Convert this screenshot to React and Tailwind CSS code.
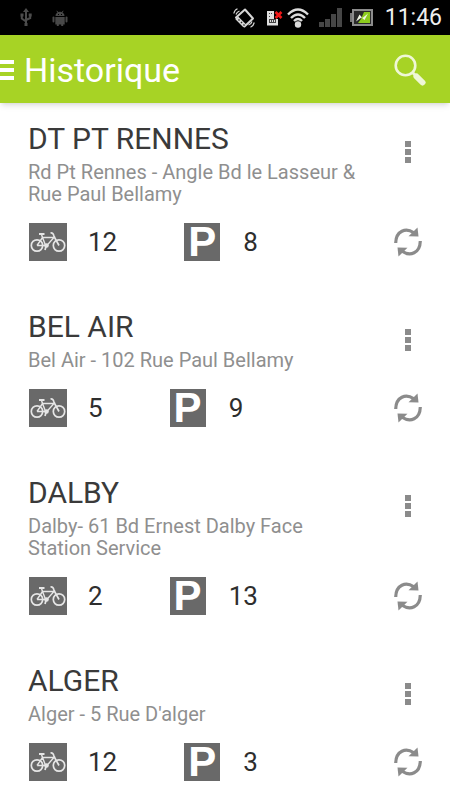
import React from "react";

const stations = [
    { id: 1, name: "DT PT RENNES", address: "Rd Pt Rennes - Angle Bd le Lasseur & Rue Paul Bellamy", bikes: 12, places: 8 },
    { id: 2, name: "BEL AIR", address: "Bel Air - 102 Rue Paul Bellamy", bikes: 5, places: 9 },
    { id: 3, name: "DALBY", address: "Dalby- 61 Bd Ernest Dalby Face Station Service", bikes: 2, places: 13 },
    { id: 4, name: "ALGER", address: "Alger - 5 Rue D'alger", bikes: 12, places: 3 },
];

function UsbIcon() {
    return (
        <svg width="12" height="20" viewBox="0 0 12 20" fill="none" stroke="#4c4c4c" strokeWidth="2">
            <path d="M6 4v12M1.8 8v2.5L6 13.5M10.2 8v2L6 12" />
            <path d="M6 0l3 4H3zM4.5 15h3v3h-3z" fill="#4c4c4c" stroke="none" />
            <path d="M0.5 5.5h3v3h-3zM8.7 5.5h3v3h-3z" fill="#4c4c4c" stroke="none" />
        </svg>
    );
}

function AndroidIcon() {
    return (
        <svg width="16" height="16" viewBox="0 0 16 16" fill="#484848">
            <path d="M3.5 6a4.5 4.2 0 0 1 9 0z" />
            <path d="M4.8 0.8l1.5 2.2M11.2 0.8L9.7 3" stroke="#484848" />
            <path d="M3.3 7h9.4v7.5H3.3z" />
            <rect x="0.5" y="6.5" width="2" height="6" rx="1" />
            <rect x="13.5" y="6.5" width="2" height="6" rx="1" />
            <rect x="4.8" y="14" width="2" height="2" />
            <rect x="9.2" y="14" width="2" height="2" />
            <path d="M6 4h1v1H6zM9 4h1v1H9z" fill="#000" />
        </svg>
    );
}

function VibrateIcon() {
    return (
        <svg width="22" height="20" viewBox="0 0 22 20" fill="none" stroke="#d6d6d6">
            <path d="M12 1.5L20 10.500L11.500 18.500L3 9.500z" strokeWidth="2" strokeLinejoin="round" />
            <path d="M3.800 9.800L11.800 17.800" strokeWidth="4" />
            <path d="M5.500 11.500l1 1M8 14l1 1M10.500 16.500l1 1" stroke="#222" strokeWidth="1.300" />
            <path d="M0.800 5.500Q1.500 2 4.500 0.800M3 6.500Q3.800 4 6.500 3" strokeWidth="1.200" />
            <path d="M21.300 14.500Q20.500 18 17.500 19.300M19 13.500Q18.300 16 15.500 17" strokeWidth="1.200" />
        </svg>
    );
}

function SimIcon() {
    return (
        <svg width="16" height="16" viewBox="0 0 16 16">
            <path d="M0 1h7v8h4v6.500H0z" fill="#dedede" />
            <path d="M2 3h1v1H2zM4 3h1v1H4zM2 6h1v1H2zM2 9h7v4H2z" fill="#444" />
            <path d="M3 10h1v2H3zM5 10h1v2H5zM7 10h1v2H7z" fill="#dedede" />
            <path d="M8.500 2l6 6M14.500 2l-6 6" stroke="#f01818" strokeWidth="2.600" />
        </svg>
    );
}

function WifiIcon() {
    return (
        <svg width="22" height="20" viewBox="0 0 22 20" fill="none" stroke="#dcdcdc" strokeWidth="2.400">
            <path d="M1 6.500Q11-3.500 21 6.500" />
            <path d="M4 10Q11 3 18 10" />
            <path d="M7 13Q11 9 15 13" />
            <circle cx="11" cy="16.500" r="3.200" fill="#dcdcdc" stroke="none" />
        </svg>
    );
}

function SignalIcon() {
    return (
        <svg width="23" height="20" viewBox="0 0 23 20" fill="#464646">
            <rect x="0" y="14" width="5" height="5" />
            <rect x="6" y="11" width="5" height="8" />
            <rect x="12" y="6" width="5" height="13" />
            <rect x="18" y="0" width="5" height="19" />
        </svg>
    );
}

function BatteryIcon() {
    return (
        <svg width="23" height="17" viewBox="0 0 23 17">
            <path d="M0 4h3v9H0z" fill="#777" />
            <rect x="3" y="1" width="19" height="15" fill="#2a2a2a" stroke="#8c8c8c" strokeWidth="2" />
            <path d="M14 3h6v11H8l3-4z" fill="#8ccc1c" />
            <path d="M6 12.500l3.500-7 3 3.500L18 4.500l-3.500 6.500-3-2.500z" fill="#f0f5e4" />
        </svg>
    );
}

function SearchIcon() {
    return (
        <svg width="32" height="32" viewBox="0 0 32 32" fill="none" stroke="#eff7d6">
            <circle cx="11.500" cy="11.500" r="9.800" strokeWidth="2.600" />
            <path d="M18.500 18.500l4 4" strokeWidth="3" />
            <path d="M22.500 22.500l6 6" strokeWidth="6" strokeLinecap="round" />
        </svg>
    );
}

function BikeIcon() {
    return (
        <svg className="bg-[#696969]" width="38" height="38" viewBox="0 0 38 38" fill="none" stroke="#e6e6e6" role="img" aria-label="Vélos">
            <circle cx="8" cy="22.500" r="5.700" strokeWidth="1.700" />
            <circle cx="30" cy="22.500" r="5.700" strokeWidth="1.700" />
            <path d="M8 22.500L13.500 14.500L17 23.500L25 14.500H13.500M8 22.500H17" strokeWidth="1.400" />
            <path d="M30 22.500L25 13.500Q24.500 9.500 21.500 10" strokeWidth="1.700" />
            <path d="M13.500 14.500L12.500 11.500" strokeWidth="1.400" />
            <path d="M10 11h5.500" strokeWidth="2" />
            <circle cx="17.500" cy="22.500" r="2.300" fill="#e6e6e6" stroke="none" />
            <path d="M17 23.500l-1 3.500" strokeWidth="1.700" />
        </svg>
    );
}

function RefreshIcon() {
    return (
        <svg width="28" height="30" viewBox="0 0 28 30" fill="none" stroke="#8b8b8b" strokeWidth="3.200">
            <path d="M1.700 16C2 3.500 12 0.500 19.500 5.500" />
            <path d="M26.300 14C26 26.500 16 29.500 8.500 24.500" />
            <path d="M23.500 0.500L24.500 9.500L14.500 9.200z" fill="#8b8b8b" stroke="none" />
            <path d="M4.500 29.500L3.500 20.500L13.500 20.800z" fill="#8b8b8b" stroke="none" />
        </svg>
    );
}

function Station({ station }) {
    return (
        <li className="pt-5 pb-[30px] pl-7 pr-[26px] last:pb-4">
            <div className="flex justify-between items-start">
                <div className="max-w-[340px]">
                    <h2 className="text-[30px] leading-8 text-[#3a3a3a]">{station.name}</h2>
                    <p className="mt-1.5 text-[20px] leading-[22px] text-[#8f8f8f]">{station.address}</p>
                </div>
                <button type="button" aria-label="Options" className="flex flex-col gap-0.5 mt-[18px] mr-[13px]">
                    <span className="size-1.5 bg-[#8b8b8b]" />
                    <span className="size-1.5 bg-[#8b8b8b]" />
                    <span className="size-1.5 bg-[#8b8b8b]" />
                </button>
            </div>
            <div className="flex items-center mt-[18px] pl-px text-[26px] leading-[38px] text-[#2e2e2e]">
                <BikeIcon />
                <span className="ml-[21px]">{station.bikes}</span>
                <span className="flex items-start justify-center w-9 h-[38px] ml-[67px] bg-[#696969] text-white text-[42px] leading-[38px] font-bold font-['Liberation_Sans',sans-serif]">
                    P
                </span>
                <span className="ml-[23px]">{station.places}</span>
                <button type="button" aria-label="Actualiser" className="ml-auto mr-0.5">
                    <RefreshIcon />
                </button>
            </div>
        </li>
    );
}

export default function App() {
    return (
        <div className="min-h-screen bg-white font-[Roboto,sans-serif]">
            <div className="flex items-center h-[35px] bg-black pl-5 pr-2">
                <UsbIcon />
                <span className="ml-5">
                    <AndroidIcon />
                </span>
                <div className="flex items-center ml-auto">
                    <VibrateIcon />
                    <span className="ml-3">
                        <SimIcon />
                    </span>
                    <span className="ml-1">
                        <WifiIcon />
                    </span>
                    <span className="ml-2.5">
                        <SignalIcon />
                    </span>
                    <span className="ml-2">
                        <BatteryIcon />
                    </span>
                    <span className="ml-3 text-[23px] leading-[35px] text-[#eee]">11:46</span>
                </div>
            </div>

            <header className="flex items-center h-[68px] bg-[#a7d325] pt-0.5 pr-6 shadow-md">
                <button type="button" aria-label="Menu" className="flex flex-col gap-1">
                    <span className="w-3.5 h-1 bg-white" />
                    <span className="w-3.5 h-1 bg-white" />
                    <span className="w-3.5 h-1 bg-white" />
                </button>
                <h1 className="ml-2.5 text-[34px] leading-10 text-white">Historique</h1>
                <button type="button" aria-label="Rechercher" className="ml-auto">
                    <SearchIcon />
                </button>
            </header>

            <ul>
                {stations.map((station) => (
                    <Station key={station.id} station={station} />
                ))}
            </ul>
        </div>
    );
}
